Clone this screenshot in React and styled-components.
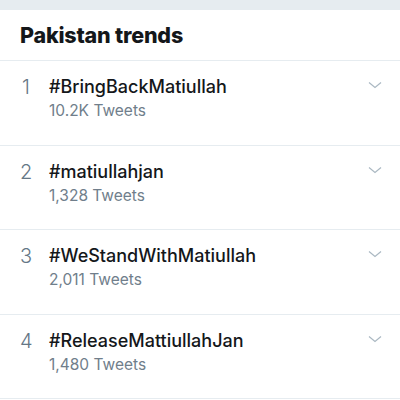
import React from 'react'
import styled, { createGlobalStyle } from 'styled-components'

const GlobalStyle = createGlobalStyle`
    body {
        margin: 0;
        background: #ffffff;
        font-family: Inter, "Liberation Sans", sans-serif;
        -webkit-font-smoothing: antialiased;
    }
`

const Page = styled.div`
    width: 400px;
    height: 400px;
    overflow: hidden;
    background: #ffffff;
`

const TopBar = styled.div`
    height: 10px;
    background: #e6ecf0;
`

const Header = styled.div`
    height: 50px;
    display: flex;
    align-items: center;
    padding: 0 20px;
    border-bottom: 1px solid #e6ecf0;
`

const Title = styled.h2`
    margin: 0;
    font-size: 21.5px;
    font-weight: 800;
    color: #14171a;
    letter-spacing: -0.2px;
`

const Row = styled.div`
    height: 84.5px;
    box-sizing: border-box;
    display: flex;
    align-items: flex-start;
    padding: 14px 0 0 20px;
    border-bottom: 1px solid #e6ecf0;
`

const Rank = styled.div`
    width: 12px;
    margin-right: 17px;
    text-align: center;
    font-size: 20px;
    font-weight: 300;
    line-height: 25px;
    color: #657786;
`

const Info = styled.div`
    flex: 1;
    display: flex;
    flex-direction: column;
`

const Tag = styled.div`
    font-size: 18px;
    font-weight: 500;
    line-height: 24px;
    color: #14171a;
`

const Count = styled.div`
    font-size: 15.5px;
    font-weight: 400;
    line-height: 24px;
    color: #707e8b;
`

const Caret = styled.div`
    width: 14px;
    margin: 6px 18px 0 0;
    display: flex;
    color: #aab8c2;
`

const trends = [
    { tag: '#BringBackMatiullah', count: '10.2K Tweets' },
    { tag: '#matiullahjan', count: '1,328 Tweets' },
    { tag: '#WeStandWithMatiullah', count: '2,011 Tweets' },
    { tag: '#ReleaseMattiullahJan', count: '1,480 Tweets' },
]

const App = () => {
    return (
        <Page>
            <GlobalStyle />
            <TopBar />
            <Header>
                <Title>Pakistan trends</Title>
            </Header>
            {trends.map((t, i) => (
                <Row key={i}>
                    <Rank>{i + 1}</Rank>
                    <Info>
                        <Tag>{t.tag}</Tag>
                        <Count>{t.count}</Count>
                    </Info>
                    <Caret>
                        <svg width="14" height="8" viewBox="0 0 14 8" fill="none">
                            <polyline points="1,1.5 7,6.5 13,1.5" stroke="currentColor" strokeWidth="1.2" />
                        </svg>
                    </Caret>
                </Row>
            ))}
        </Page>
    )
}

export default App
